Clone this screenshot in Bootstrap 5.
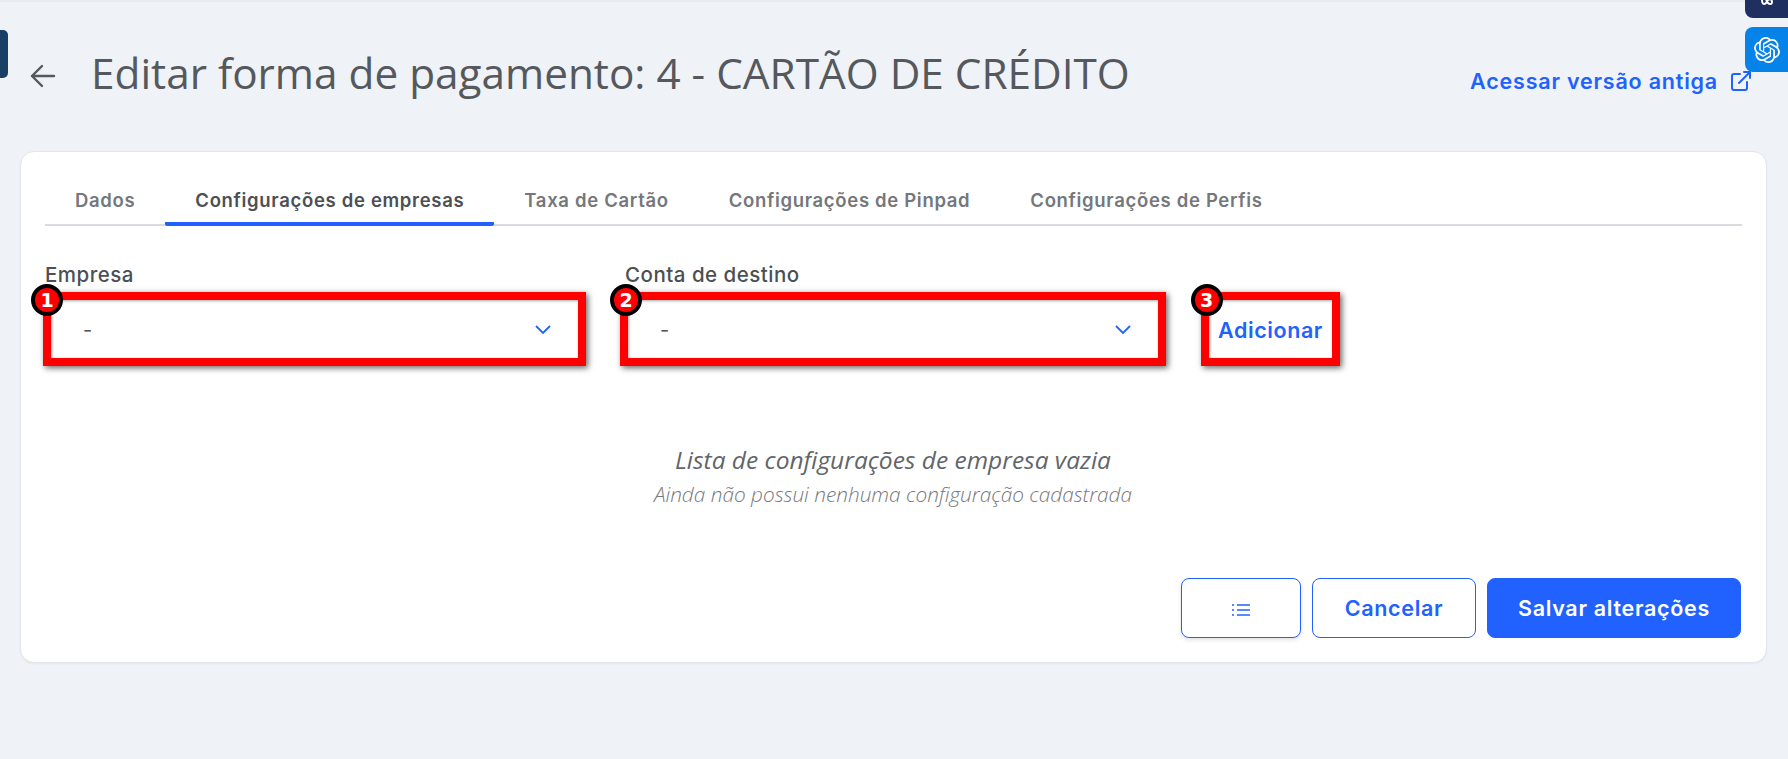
<!DOCTYPE html>
<html lang="pt-BR">
<head>
    <meta charset="UTF-8">
    <meta name="viewport" content="width=device-width, initial-scale=1.0">
    <title>Editar forma de pagamento</title>
    <link href="https://cdn.jsdelivr.net/npm/bootstrap@5.3.3/dist/css/bootstrap.min.css" rel="stylesheet">
    <script src="https://cdn.jsdelivr.net/npm/bootstrap@5.3.3/dist/js/bootstrap.bundle.min.js"></script>
    <style>
        body {background: #eff2f7; font-family: "Inter", "Liberation Sans", sans-serif; min-height: 759px; overflow: hidden; border-top: 2px solid #e9ebf0;}
        .page-wrap {padding: 0 21px 0 20px;}
        .page-head {height: 149px; padding: 44px 16px 0 10px;}
        .page-title {font-family: "Open Sans", "Noto Sans", sans-serif; font-size: 42.3px; font-weight: 400; color: #55585c; margin: 0 0 0 35px; line-height: 54px;}
        .back-btn {color: #55585c; margin-top: 18px;}
        .old-link {color: #2162ff; font-size: 21.5px; font-weight: 600; letter-spacing: .8px; text-decoration: none; margin-top: 19px; gap: 13px;}
        .main-card {height: 512px; border: 1px solid #e2e5ea; border-radius: 14px; padding: 25px 25px 24px 24px; box-shadow: 0 1px 2px rgba(0,0,0,.05);}
        .tab-row {border-bottom: 2px solid #d9dbe0; height: 49px; margin-right: -1px;}
        .tab-item {font-size: 18.5px; font-weight: 600; letter-spacing: .68px; color: #74777c; padding: 0 30px; height: 49px; line-height: 46px; text-decoration: none; margin-bottom: -2px;}
        .tab-item.on {color: #4c4f54; border-bottom: 4px solid #2162ff; border-radius: 2px;}
        .field-row {margin: 36px 0 0 -2px;}
        .field-label {font-size: 20.5px; font-weight: 500; letter-spacing: .5px; color: #4c4f54; line-height: 26px; margin-bottom: 4px; padding-left: 2px;}
        .field-two {margin-left: 34px;}
        .field-two .field-label {padding-left: 5px;}
        .mark-box {position: relative; border: 8px solid #f00; box-shadow: 2px 2px 6px rgba(0,0,0,.6), inset 1px 1px 3px rgba(0,0,0,.35); height: 74px;}
        .pick-box {width: 543px; padding: 2px 27px 0 32px; color: #55585c; font-size: 20px;}
        .field-two .pick-box {width: 546px;}
        .num-mark {position: absolute; left: -18px; top: -16px; width: 32px; height: 32px; border-radius: 50%; background: #f00; border: 4px solid #000; color: #fff; font-family: "DejaVu Sans", sans-serif; font-weight: 700; font-size: 19px; line-height: 24px; text-align: center;}
        .num-first {left: -20px;}
        .add-box {width: 139px; margin-left: 35px; padding-top: 2px; color: #2162ff; font-size: 21.5px; font-weight: 600; letter-spacing: .6px;}
        .empty-msg {margin-top: 78px; color: #626569; font-family: "Open Sans", "Noto Sans", sans-serif; font-style: italic;}
        .empty-msg h5 {font-size: 24.5px; font-weight: 500; line-height: 32px; margin: 0; color: #626569;}
        .empty-msg p {font-size: 20.8px; line-height: 30px; margin: 3px 0 0; color: #77797d; font-weight: 300;}
        .foot-row {gap: 11px;}
        .foot-btn {height: 60px; border-radius: 8px; font-size: 21.5px; font-weight: 600; letter-spacing: .7px; border: 1px solid #2162ff; color: #2162ff; background: #fff;}
        .foot-btn.solid {background: #2162ff; color: #fff; width: 254px;}
        .foot-btn.list-btn {width: 120px; box-shadow: 0 2px 4px rgba(0,0,0,.12);}
        .foot-btn.cancel-btn {width: 164px;}
        .side-tab {position: absolute; left: 0; top: 30px; width: 8px; height: 48px; background: #1a3f66; border-radius: 0 5px 5px 0;}
        .side-dark {position: absolute; right: 0; top: 0; width: 43px; height: 18px; background: #1e2f60; border-radius: 0 0 0 8px; overflow: hidden;}
        .side-blue {position: absolute; right: 0; top: 27px; width: 43px; height: 45px; background: #0583e8; border-radius: 8px 0 0 8px;}
    </style>
</head>
<body>
<div class="side-tab"></div>
<div class="side-dark d-flex justify-content-center">
    <svg width="14" height="6" viewBox="0 0 14 6" fill="none" stroke="#fff" stroke-width="2"><path d="M2 0c0 4 2 5 4 3l2-3c2-2 4 0 4 2s-2 3-4 1L6 0"/></svg>
</div>
<div class="side-blue d-flex align-items-center justify-content-center">
    <svg width="26" height="26" viewBox="0 0 24 24" fill="#fff"><path d="M22.2819 9.8211a5.9847 5.9847 0 0 0-.5157-4.9108 6.0462 6.0462 0 0 0-6.5098-2.9A6.0651 6.0651 0 0 0 4.9807 4.1818a5.9847 5.9847 0 0 0-3.9977 2.9 6.0462 6.0462 0 0 0 .7427 7.0966 5.98 5.98 0 0 0 .511 4.9107 6.051 6.051 0 0 0 6.5146 2.9001A5.9847 5.9847 0 0 0 13.2599 24a6.0557 6.0557 0 0 0 5.7718-4.2058 5.9894 5.9894 0 0 0 3.9977-2.9001 6.0557 6.0557 0 0 0-.7475-7.0729zm-9.022 12.6081a4.4755 4.4755 0 0 1-2.8764-1.0408l.1419-.0804 4.7783-2.7582a.7948.7948 0 0 0 .3927-.6813v-6.7369l2.02 1.1686a.071.071 0 0 1 .038.052v5.5826a4.504 4.504 0 0 1-4.4945 4.4944zm-9.6607-4.1254a4.4708 4.4708 0 0 1-.5346-3.0137l.142.0852 4.783 2.7582a.7712.7712 0 0 0 .7806 0l5.8428-3.3685v2.3324a.0804.0804 0 0 1-.0332.0615L9.74 19.9502a4.4992 4.4992 0 0 1-6.1408-1.6464zM2.3408 7.8956a4.485 4.485 0 0 1 2.3655-1.9728V11.6a.7664.7664 0 0 0 .3879.6765l5.8144 3.3543-2.0201 1.1685a.0757.0757 0 0 1-.071 0l-4.8303-2.7865A4.504 4.504 0 0 1 2.3408 7.872zm16.5963 3.8558L13.1038 8.364 15.1192 7.2a.0757.0757 0 0 1 .071 0l4.8303 2.7913a4.4944 4.4944 0 0 1-.6765 8.1042v-5.6772a.79.79 0 0 0-.407-.667zm2.0107-3.0231l-.142-.0852-4.7735-2.7818a.7759.7759 0 0 0-.7854 0L9.409 9.2297V6.8974a.0662.0662 0 0 1 .0284-.0615l4.8303-2.7866a4.4992 4.4992 0 0 1 6.6802 4.66zM8.3065 12.863l-2.02-1.1638a.0804.0804 0 0 1-.038-.0567V6.0742a4.4992 4.4992 0 0 1 7.3757-3.4537l-.142.0805L8.704 5.459a.7948.7948 0 0 0-.3927.6813zm1.0976-2.3654l2.602-1.4998 2.6069 1.4998v2.9994l-2.5974 1.4997-2.6067-1.4997Z"/></svg>
</div>
<div class="page-wrap">
    <div class="page-head d-flex justify-content-between align-items-start">
        <div class="d-flex align-items-start">
            <svg class="back-btn" width="26" height="24" viewBox="0 0 26 24" fill="none" stroke="currentColor" stroke-width="2.400" stroke-linecap="round" stroke-linejoin="round"><path d="M24 12H2M12 2 2 12l10 10"/></svg>
            <h1 class="page-title">Editar forma de pagamento: 4 - CARTÃO DE CRÉDITO</h1>
        </div>
        <a href="#" class="old-link d-flex align-items-center">Acessar versão antiga
            <svg width="20" height="20" viewBox="0 0 20 20" fill="none" stroke="currentColor" stroke-width="2" stroke-linecap="round" stroke-linejoin="round"><path d="M9 3H3a2 2 0 0 0-2 2v12a2 2 0 0 0 2 2h11a2 2 0 0 0 2-2v-6M8 12 19 1M13 1h6v6"/></svg>
        </a>
    </div>
    <div class="main-card bg-white d-flex flex-column">
        <div class="tab-row d-flex">
            <a href="#" class="tab-item">Dados</a>
            <a href="#" class="tab-item on">Configurações de empresas</a>
            <a href="#" class="tab-item">Taxa de Cartão</a>
            <a href="#" class="tab-item">Configurações de Pinpad</a>
            <a href="#" class="tab-item">Configurações de Perfis</a>
        </div>
        <div class="field-row d-flex align-items-end">
            <div>
                <div class="field-label">Empresa</div>
                <div class="mark-box pick-box d-flex align-items-center justify-content-between">
                    <span class="num-mark num-first">1</span>
                    <span>-</span>
                    <svg width="16" height="10" viewBox="0 0 16 10" fill="none" stroke="#2162ff" stroke-width="1.800"><path d="m1 1 7 7 7-7"/></svg>
                </div>
            </div>
            <div class="field-two">
                <div class="field-label">Conta de destino</div>
                <div class="mark-box pick-box d-flex align-items-center justify-content-between">
                    <span class="num-mark">2</span>
                    <span>-</span>
                    <svg width="16" height="10" viewBox="0 0 16 10" fill="none" stroke="#2162ff" stroke-width="1.800"><path d="m1 1 7 7 7-7"/></svg>
                </div>
            </div>
            <div class="mark-box add-box d-flex align-items-center justify-content-center">
                <span class="num-mark">3</span>
                Adicionar
            </div>
        </div>
        <div class="empty-msg text-center">
            <h5>Lista de configurações de empresa vazia</h5>
            <p>Ainda não possui nenhuma configuração cadastrada</p>
        </div>
        <div class="foot-row d-flex justify-content-end mt-auto">
            <button type="button" class="btn foot-btn list-btn">
                <svg width="18" height="14" viewBox="0 0 18 14" fill="none" stroke="currentColor" stroke-width="1.500"><path d="M5 2h13M5 7h13M5 12h13M0 2h2M0 7h2M0 12h2"/></svg>
            </button>
            <button type="button" class="btn foot-btn cancel-btn">Cancelar</button>
            <button type="button" class="btn foot-btn solid">Salvar alterações</button>
        </div>
    </div>
</div>
</body>
</html>
